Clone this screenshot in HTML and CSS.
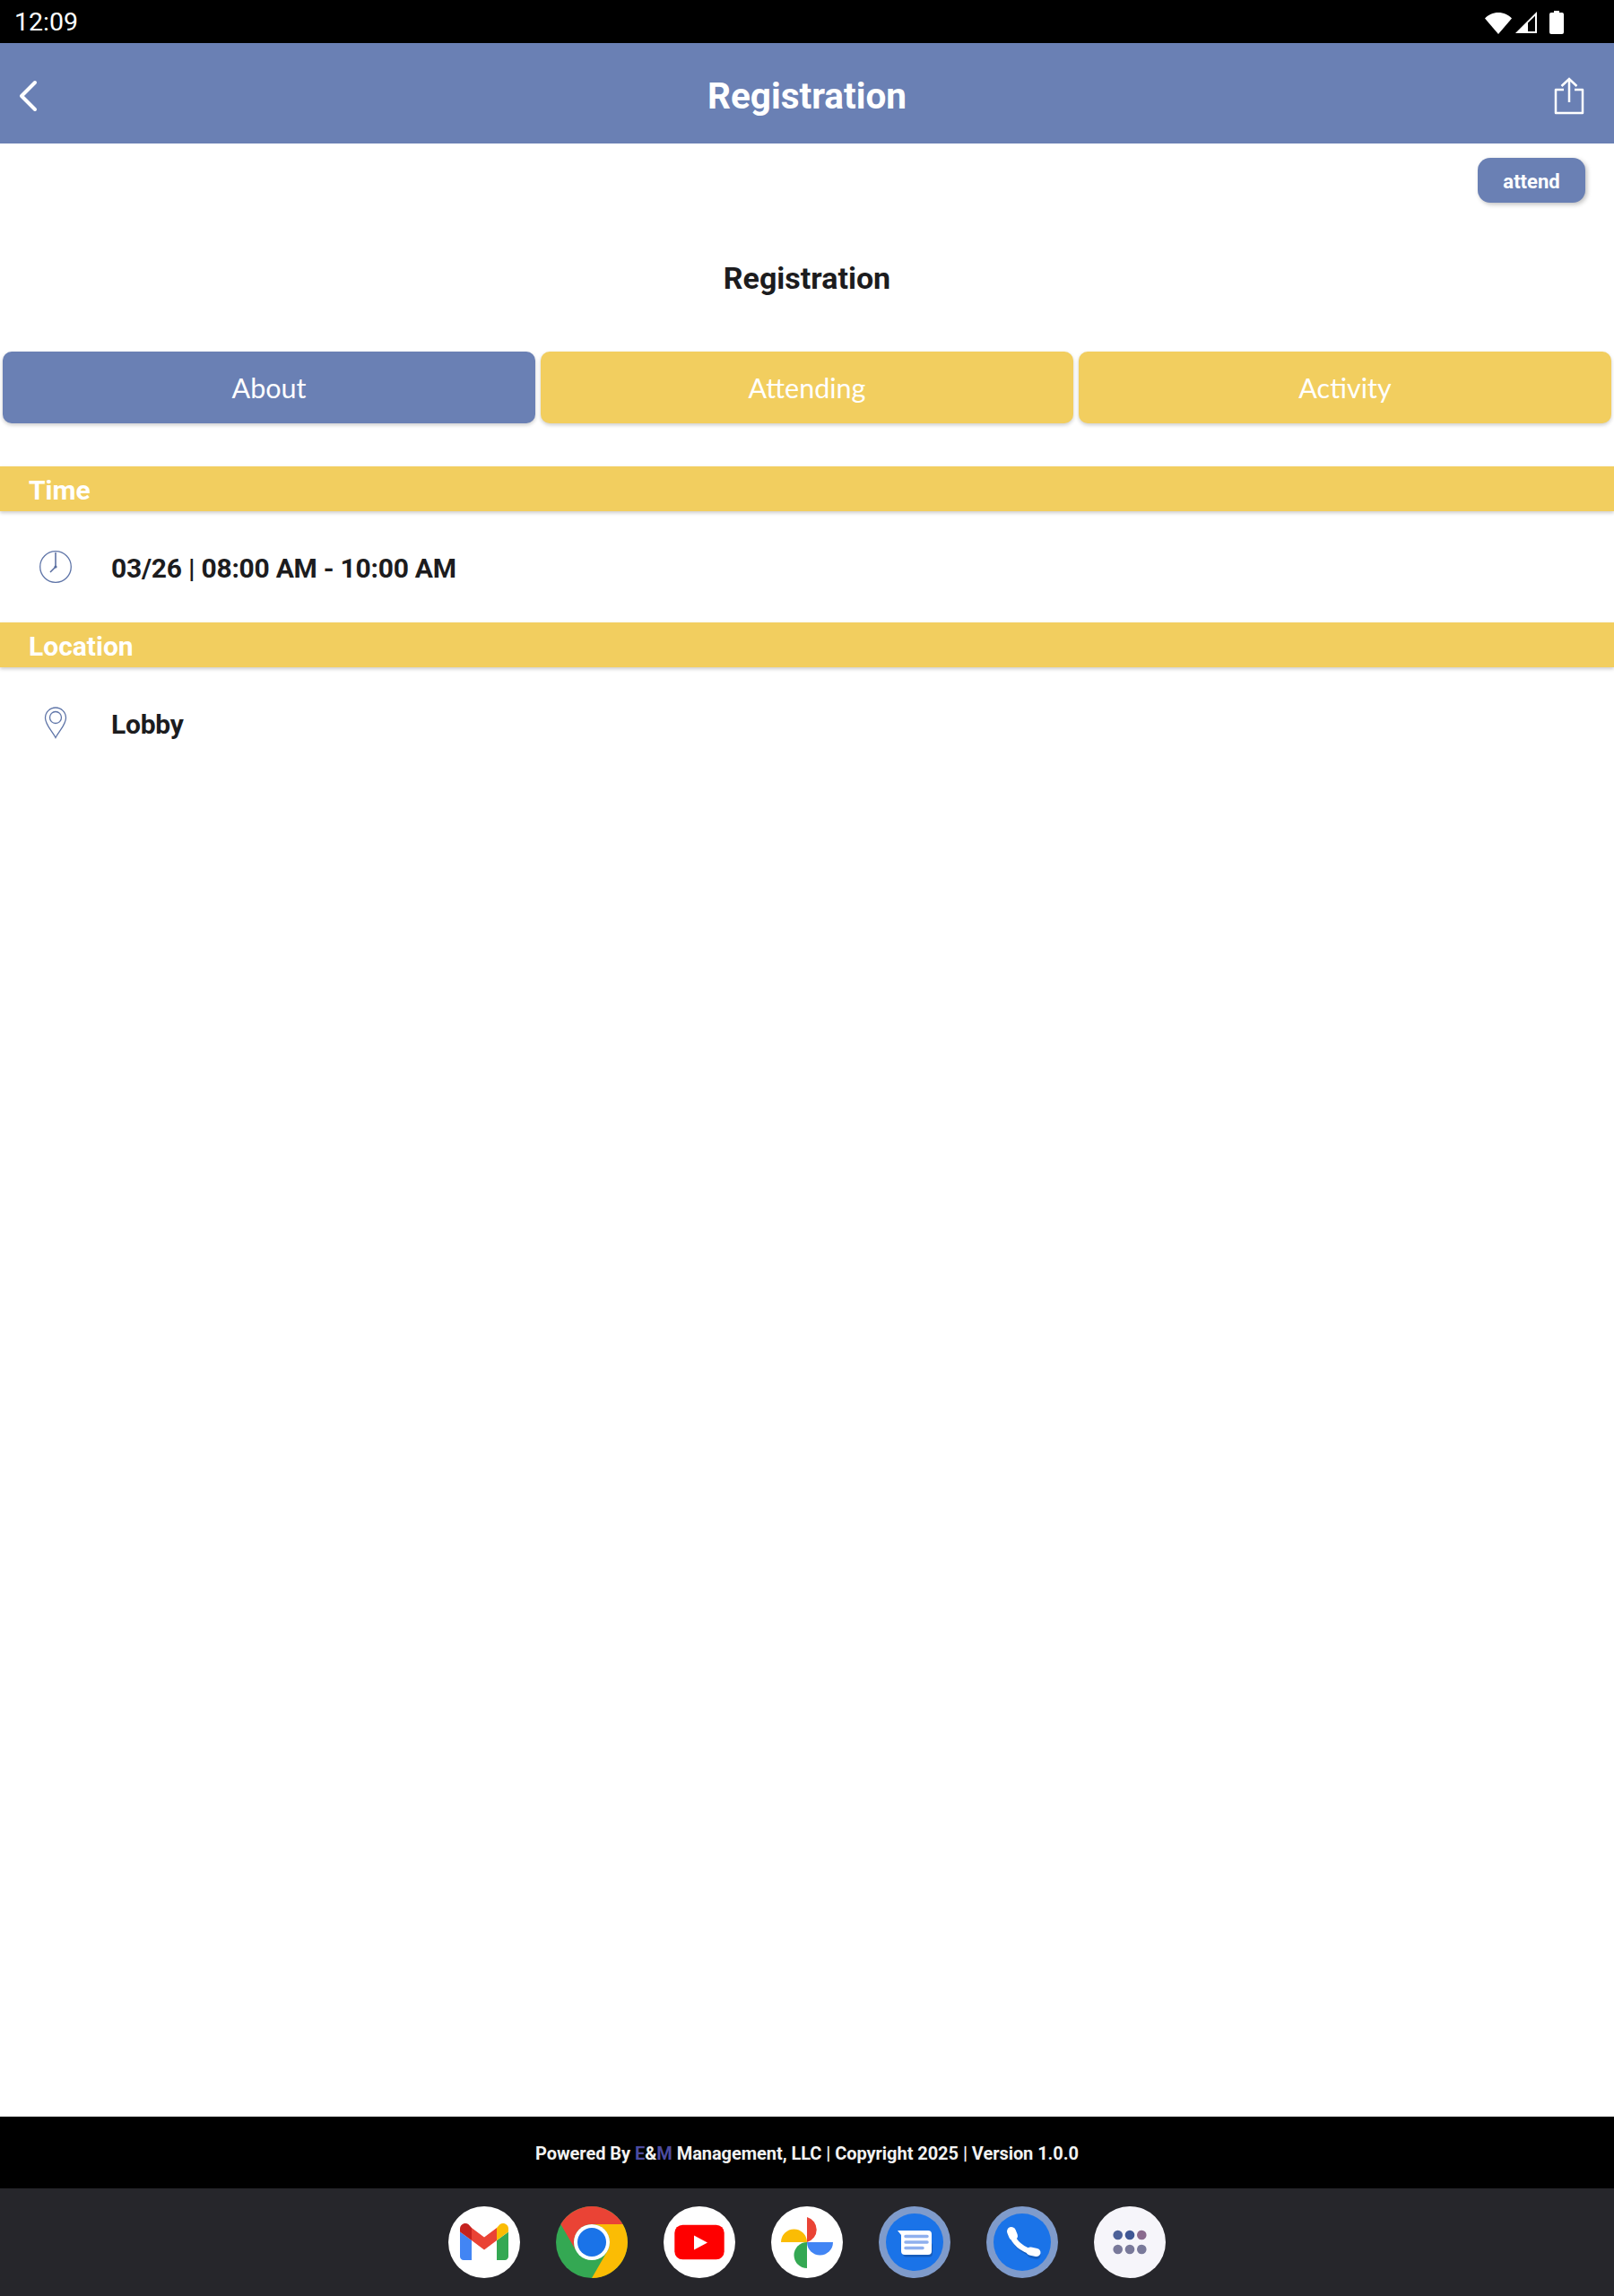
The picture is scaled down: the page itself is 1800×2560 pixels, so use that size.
FILE: index.html
```html
<!DOCTYPE html>
<html lang="en">

<head>
  <meta charset="UTF-8">
  <meta name="viewport" content="width=device-width, initial-scale=1.0">
  <title>Registration</title>
  <link rel="stylesheet" href="styles.css">
</head>

<body>
  <div class="status">
    <span class="status__time">12:09</span>
    <div class="status__icons">
      <svg width="32" height="26" viewBox="0 0 32 26">
        <path d="M1 8.500C4.800 4.500 10 2 16 2s11.200 2.500 15 6.500L16 26z" fill="#fff" />
      </svg>
      <svg width="26" height="26" viewBox="0 0 26 26">
        <path d="M1 25 25 1v24z" fill="#fff" />
        <path d="M15 13.500 23 5.800V23h-8z" fill="#000" />
        <path d="M15 14 8 23h7z" fill="#fff" />
      </svg>
      <svg width="16" height="26" viewBox="0 0 16 26">
        <path d="M5 0h6v2h3a2 2 0 0 1 2 2v20a2 2 0 0 1-2 2H2a2 2 0 0 1-2-2V4a2 2 0 0 1 2-2h3z" fill="#fff" />
      </svg>
    </div>
  </div>

  <header class="topbar">
    <a class="topbar__back">
      <svg width="24" height="36" viewBox="0 0 24 36">
        <path d="M20 3 5 18l15 15" fill="none" stroke="#fff" stroke-width="4" stroke-linecap="round" stroke-linejoin="round" />
      </svg>
    </a>
    <h1 class="topbar__title">Registration</h1>
    <a class="topbar__share">
      <svg width="34" height="42" viewBox="0 0 34 42">
        <path d="M11 14H2v26h30V14h-9" fill="none" stroke="#fff" stroke-width="2.500" stroke-linejoin="round" />
        <path d="M17 28V2M8.500 10 17 2l8.500 8" fill="none" stroke="#fff" stroke-width="2.500" />
      </svg>
    </a>
  </header>

  <main class="page">
    <div class="page__actions">
      <button class="attend">attend</button>
    </div>
    <h2 class="page__title">Registration</h2>

    <div class="tabs">
      <div class="tabs__item tabs__item_active">About</div>
      <div class="tabs__item">Attending</div>
      <div class="tabs__item">Activity</div>
    </div>

    <section class="block">
      <h3 class="block__head">Time</h3>
      <div class="block__row">
        <svg class="block__icon" width="36" height="36" viewBox="0 0 36 36">
          <circle cx="18" cy="18" r="17.300" fill="none" stroke="#5f75a8" stroke-width="1.300" />
          <path d="M18 2v16l-6 6" fill="none" stroke="#566b9e" stroke-width="1.500" />
          <circle cx="18" cy="18" r="1.600" fill="#566b9e" />
        </svg>
        <span class="block__text">03/26 | 08:00 AM - 10:00 AM</span>
      </div>
    </section>

    <section class="block">
      <h3 class="block__head">Location</h3>
      <div class="block__row">
        <svg class="block__icon" width="36" height="36" viewBox="0 0 36 36">
          <path d="M18 34.500C14 27 6.500 20 6.500 12.500a11.500 11.500 0 0 1 23 0C29.500 20 22 27 18 34.500z" fill="none" stroke="#5f75a8" stroke-width="1.300" />
          <circle cx="18" cy="12" r="6.500" fill="none" stroke="#5f75a8" stroke-width="1.300" />
        </svg>
        <span class="block__text">Lobby</span>
      </div>
    </section>
  </main>

  <footer class="footer">
    Powered By&nbsp;<span class="footer__em">E</span>&amp;<span class="footer__em">M</span>&nbsp;Management, LLC | Copyright 2025 | Version 1.0.0
  </footer>

  <div class="dock">
    <!-- gmail -->
    <svg class="dock__app" viewBox="0 0 80 80">
      <circle cx="40" cy="40" r="40" fill="#fff" />
      <path d="M17 60h9V38L13 28.500V56c0 2.200 1.800 4 4 4z" fill="#4285f4" />
      <path d="M54 60h9c2.200 0 4-1.800 4-4V28.500L54 38z" fill="#34a853" />
      <path d="M54 24v14l13-9.500V25c0-5-5.700-7.800-9.600-4.800z" fill="#fbbc04" />
      <path d="M26 38V24l14 10.500L54 24v14L40 48.500z" fill="#ea4335" />
      <path d="M13 25v3.500L26 38V24l-3.400-3.800C18.700 17.200 13 20 13 25z" fill="#c5221f" />
    </svg>
    <!-- chrome -->
    <svg class="dock__app" viewBox="0 0 80 80">
      <circle cx="40" cy="40" r="40" fill="#34a853" />
      <path d="M5.400 20A40 40 0 0 1 74.600 20H40A20 20 0 0 0 22.700 50z" fill="#ea4335" />
      <path d="M74.600 20A40 40 0 0 1 40 80L57.300 50A20 20 0 0 0 40 20z" fill="#fbbc04" />
      <circle cx="40" cy="40" r="20" fill="#fff" />
      <circle cx="40" cy="40" r="16" fill="#1a73e8" />
    </svg>
    <!-- youtube -->
    <svg class="dock__app" viewBox="0 0 80 80">
      <circle cx="40" cy="40" r="40" fill="#fff" />
      <rect x="12.300" y="20.700" width="55.400" height="38.600" rx="9" fill="#f00" />
      <path d="M34 32.500 49 40.500 34 48.500z" fill="#fff" />
    </svg>
    <!-- photos -->
    <svg class="dock__app" viewBox="0 0 80 80">
      <circle cx="40" cy="40" r="40" fill="#fff" />
      <path d="M11 40a14.500 14.500 0 0 1 29 0z" fill="#fbbc04" />
      <path d="M40 12a14.500 14.500 0 0 1 0 28z" fill="#ea4335" />
      <path d="M40 40h29a14.500 14.500 0 0 1-29 0z" fill="#4285f4" />
      <path d="M40 40v29a14.500 14.500 0 0 1 0-29z" fill="#34a853" />
    </svg>
    <!-- messages -->
    <svg class="dock__app" viewBox="0 0 80 80">
      <circle cx="40" cy="40" r="40" fill="#7f9bcb" />
      <circle cx="40" cy="40" r="32" fill="#1a73e8" />
      <rect x="27" y="40" width="33" height="16.500" rx="4" fill="#1552a8" opacity=".7" />
      <path d="M21 27h34a4 4 0 0 1 4 4v19a4 4 0 0 1-4 4H29a4 4 0 0 1-4-4V32z" fill="#fff" />
      <path d="M30 33.500h24M30 40h24M30 46.500h19" stroke="#8fb0ee" stroke-width="3.500" stroke-linecap="round" />
    </svg>
    <!-- phone -->
    <svg class="dock__app" viewBox="0 0 80 80">
      <circle cx="40" cy="40" r="40" fill="#7f9bcb" />
      <circle cx="40" cy="40" r="32" fill="#1a73e8" />
      <g fill="none" stroke="#1552a8" stroke-linecap="round" opacity=".6" transform="translate(1 2)">
        <path d="M29 31Q33 47 54 52" stroke-width="6" />
        <path d="M49 51 55 52.500" stroke-width="9" />
      </g>
      <g fill="none" stroke="#fff" stroke-linecap="round">
        <path d="M28 30Q32 46 54 52" stroke-width="6" />
        <path d="M28 28 30 33" stroke-width="10" />
        <path d="M49 50 56 51.500" stroke-width="9" />
      </g>
    </svg>
    <!-- apps -->
    <svg class="dock__app" viewBox="0 0 80 80">
      <circle cx="40" cy="40" r="40" fill="#f6f5fa" />
      <circle cx="26.700" cy="32" r="5.300" fill="#4d6199" />
      <circle cx="40" cy="32" r="5.300" fill="#3f5795" />
      <circle cx="53.300" cy="32" r="5.300" fill="#8a6a8e" />
      <circle cx="26.700" cy="48" r="5.300" fill="#79799a" />
      <circle cx="40" cy="48" r="5.300" fill="#79799a" />
      <circle cx="53.300" cy="48" r="5.300" fill="#79799a" />
    </svg>
  </div>
</body>

</html>
```

FILE: styles.css
```css
* {
  box-sizing: border-box;
  margin: 0;
  padding: 0;
}

body {
  display: flex;
  flex-direction: column;
  height: 2560px;
  overflow: hidden;
  background-color: #fff;
  font-family: Roboto, "Liberation Sans", sans-serif;
}

.status {
  display: flex;
  align-items: center;
  justify-content: space-between;
  height: 48px;
  padding: 1px 56px 0 16px;
  background-color: #000;
  color: #fff;
}

.status__time {
  font-size: 28.500px;
}

.status__icons {
  display: flex;
  align-items: center;
  gap: 2px;
}

.status__icons svg:last-child {
  margin-left: 11px;
}

.topbar {
  display: grid;
  grid-template-columns: 1fr auto 1fr;
  align-items: center;
  height: 112px;
  padding: 5px 32px 0;
  background-color: #6a80b4;
}

.topbar__back,
.topbar__share {
  display: flex;
}

.topbar__back {
  margin-left: -13px;
}

.topbar__share {
  justify-content: flex-end;
  margin-right: 1px;
}

.topbar__title {
  font-size: 40.500px;
  font-weight: 700;
  color: #fff;
}

.page {
  flex: 1 1 auto;
}

.page__actions {
  display: flex;
  justify-content: flex-end;
  padding: 16px 32px 0 0;
}

.attend {
  width: 120px;
  height: 50px;
  padding-top: 2px;
  border: none;
  border-radius: 14px;
  background-color: #6a80b4;
  box-shadow: 2px 2px 5px rgba(0, 0, 0, 0.25);
  color: #fff;
  font-family: inherit;
  font-size: 22px;
  font-weight: 700;
}

.page__title {
  margin-top: 62px;
  font-size: 34px;
  font-weight: 700;
  line-height: 44px;
  text-align: center;
  color: #1c1c1e;
}

.tabs {
  display: grid;
  grid-template-columns: repeat(3, 1fr);
  gap: 6px;
  margin-top: 60px;
  padding: 0 3px;
}

.tabs__item {
  display: flex;
  align-items: center;
  justify-content: center;
  height: 80px;
  border-radius: 10px;
  background-color: #f2ce5f;
  box-shadow: 0 2px 4px rgba(0, 0, 0, 0.2);
  color: #fff;
  font-family: Lato, sans-serif;
  font-size: 30.500px;
}

.tabs__item_active {
  background-color: #6a80b4;
}

.tabs + .block {
  margin-top: 48px;
}

.block__head {
  height: 50px;
  padding: 2px 0 0 32px;
  background-color: #f2ce5f;
  box-shadow: 0 2px 4px rgba(0, 0, 0, 0.2);
  color: #fff;
  font-size: 30px;
  font-weight: 700;
  line-height: 50px;
}

.block__row {
  display: flex;
  align-items: center;
  gap: 44px;
  height: 124px;
  padding: 2px 0 0 44px;
}

.block__icon {
  flex: none;
  margin-top: -2px;
}

.block__text {
  font-size: 30px;
  font-weight: 700;
  letter-spacing: -0.25px;
  color: #1c1c1e;
}

.footer {
  display: flex;
  align-items: center;
  justify-content: center;
  height: 80px;
  padding-top: 2px;
  background-color: #000;
  color: #f2f2f2;
  font-size: 20px;
  font-weight: 700;
  letter-spacing: -0.05px;
}

.footer__em {
  color: #4b4b9f;
}

.dock {
  display: flex;
  align-items: center;
  justify-content: center;
  gap: 40px;
  height: 120px;
  background-color: #26262b;
}

.dock__app {
  width: 80px;
  height: 80px;
}
```
